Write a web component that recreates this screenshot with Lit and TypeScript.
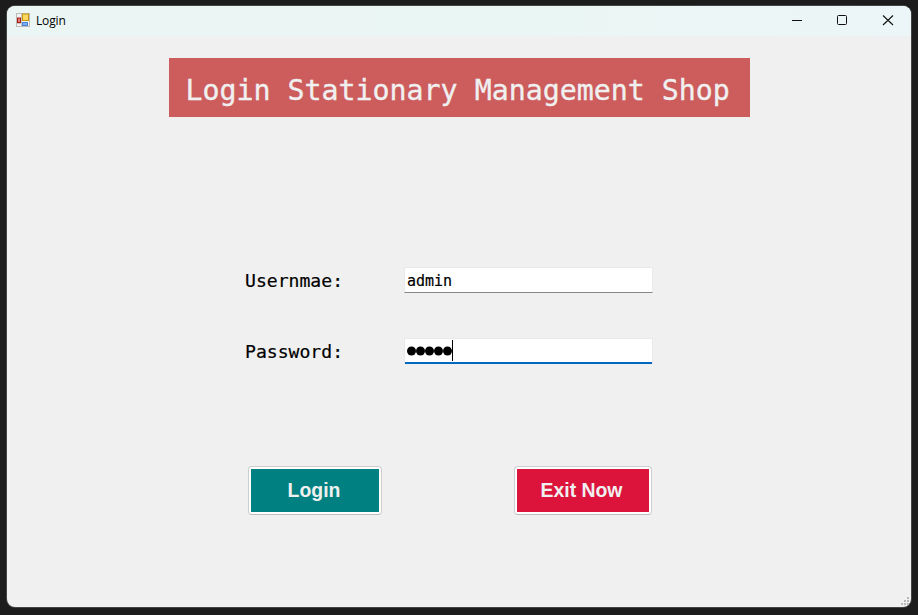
import { LitElement, html, svg, css } from "lit";
import { customElement } from "lit/decorators.js";

@customElement("app-root")
export class AppRoot extends LitElement {
  static styles = css`
    :host {
      display: block;
      box-sizing: border-box;
      width: 918px;
      height: 615px;
      padding: 6px 7px 8px;
      background: #1c1c1c;
      overflow: hidden;
    }
    * { box-sizing: border-box; }
    .window {
      position: relative;
      width: 904px;
      height: 601px;
      border-radius: 8px;
      overflow: hidden;
      background: #f0f0f0;
      box-shadow: 0 0 0 1px #444;
      display: flex;
      flex-direction: column;
      font-family: "DejaVu Sans Mono", monospace;
      color: #000;
    }
    .titlebar {
      height: 30px;
      flex: none;
      display: flex;
      align-items: center;
      padding-left: 9px;
      background: linear-gradient(90deg, #ebf6f4, #eaf6f4 60%, #ecf5f7);
    }
    .caption {
      flex: 1;
      margin-left: 6px;
      font: 12px/16px "Open Sans", sans-serif;
      letter-spacing: -0.15px;
    }
    .logo { display: block; margin-top: -2px; }
    .controls { display: block; width: 137px; height: 30px; }
    .body {
      flex: 1;
      display: flex;
      flex-direction: column;
      align-items: flex-start;
      padding-top: 22px;
    }
    .banner {
      margin-left: 162px;
      width: 581px;
      height: 59px;
      padding: 3px 0 0 16.5px;
      background: #cd5c5c;
      color: #f0f0f0;
      font-size: 28.25px;
      line-height: 59px;
      white-space: pre;
      -webkit-text-stroke: 0.35px #f0f0f0;
    }
    .form {
      margin: 150px 0 0 238px;
      display: grid;
      grid-template-columns: 159px 249px;
      row-gap: 43px;
    }
    .label {
      font-size: 18.1px;
      line-height: 28px;
      height: 28px;
      white-space: pre;
      -webkit-text-stroke: 0.2px #000;
    }
    .field {
      height: 26px;
      padding: 1px 1px 0 2px;
      display: flex;
      align-items: center;
      font-size: 15px;
      background: #fff;
      border: 1px solid #e9e9e9;
    }
    .user {
      border-bottom: 1px solid #868686;
      -webkit-text-stroke: 0.2px #000;
    }
    .pass {
      border-bottom: none;
      box-shadow: inset 0 -2px 0 #0067c0;
      padding-bottom: 2px;
    }
    .dots { display: block; }
    .caret { width: 1px; height: 21px; background: #000; margin-top: -1px; }
    .actions {
      margin: 100px 0 0 241px;
      display: flex;
      gap: 132px;
    }
    .btn {
      height: 49px;
      width: 134px;
      padding: 2px;
      border: 1px solid #cecece;
      border-bottom-color: #bcbcbc;
      border-radius: 4px;
      background: #fff;
      font: bold 19.4px/43px "Liberation Sans", sans-serif;
      color: #f0f0f0;
      text-align: center;
    }
    .btn.exit { width: 138px; }
    .face { display: block; height: 43px; background: #008080; padding-right: 2px; }
    .exit .face { background: #dc143c; padding-right: 3px; }
    .grip { position: absolute; right: 0; bottom: 0; }
  `;

  render() {
    return html`
      <div class="window">
        <div class="titlebar">
          <svg class="logo" width="14" height="14" viewBox="0 0 14 14">
            <rect x=".5" y=".5" width="13" height="13" fill="#f4f4f4" stroke="#bcbcbc" />
            <path d="M5.5 1v12M1 10.500h5" stroke="#c8c8c8" />
            <rect x="6.500" y="1" width="6" height="6.500" fill="#fbd862" stroke="#c8960c" />
            <rect x="1.500" y="5" width="3" height="4.500" fill="#e08080" stroke="#a81c10" />
            <rect x="6.500" y="9.500" width="5" height="3" fill="#7cb0f4" stroke="#4a80d0" />
          </svg>
          <span class="caption">Login</span>
          <svg class="controls" viewBox="0 0 137 30" fill="none" stroke="#111">
            <path d="M18 14.500h10" />
            <rect x="63.500" y="9.500" width="9" height="9" rx="1" />
            <path d="M109 9.500l10 9.500M119 9.500l-10 9.500" stroke-width="1.100" />
          </svg>
        </div>
        <div class="body">
          <div class="banner">Login Stationary Management Shop</div>
          <div class="form">
            <span class="label">Usernmae:</span>
            <div class="field user">admin</div>
            <span class="label">Password:</span>
            <div class="field pass">
              <svg class="dots" width="45" height="10" viewBox="0 0 45 10">
                ${[4.5, 13.5, 22.5, 31.5, 40.5].map((x) => svg`<circle cx=${x} cy="5" r="4.500" />`)}
              </svg>
              <span class="caret"></span>
            </div>
          </div>
          <div class="actions">
            <div class="btn"><span class="face">Login</span></div>
            <div class="btn exit"><span class="face">Exit Now</span></div>
          </div>
        </div>
        <svg class="grip" width="12" height="12" fill="#b8b8b8">
          <path d="M8 2h2v2h-2zM5 5h2v2h-2zM8 5h2v2h-2zM2 8h2v2h-2zM5 8h2v2h-2zM8 8h2v2h-2z" />
        </svg>
      </div>
    `;
  }
}
